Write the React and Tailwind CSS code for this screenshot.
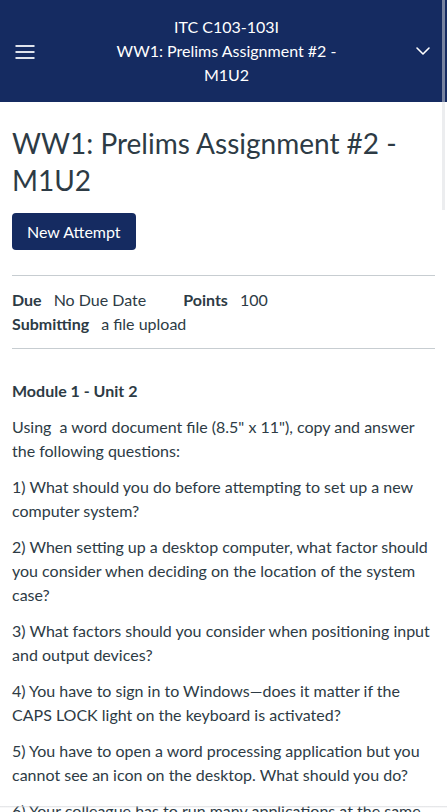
import { ChevronDown } from 'lucide-react';

const questions = [
    '1) What should you do before attempting to set up a new computer system?',
    '2) When setting up a desktop computer, what factor should you consider when deciding on the location of the system case?',
    '3) What factors should you consider when positioning input and output devices?',
    '4) You have to sign in to Windows\u2014does it matter if the CAPS LOCK light on the keyboard is activated?',
    '5) You have to open a word processing application but you cannot see an icon on the desktop. What should you do?',
    '6) Your colleague has to run many applications at the same time. What should they do to keep the computer running smoothly?',
];

const MenuIcon = () => (
    <svg width="20" height="14" viewBox="0 0 20 14" className="block">
        <rect x="0.5" y="0" width="19" height="2" fill="#dfe3ec" />
        <rect x="0.5" y="6" width="19" height="2" fill="#dfe3ec" />
        <rect x="0.5" y="12" width="19" height="2" fill="#dfe3ec" />
    </svg>
);

const App = () => {
    return (
        <div className="relative h-[812px] overflow-hidden bg-white text-[#2d3b45] font-['Lato','Liberation_Sans',sans-serif]">
            {/* top bar */}
            <header className="flex items-center h-[102px] bg-[#152b61] text-white">
                <div className="w-[114px] pl-[15px] pt-[2px] flex items-center">
                    <MenuIcon />
                </div>
                <div className="flex-1 text-center text-[16px] leading-[24px]">
                    <div>ITC C103-103I</div>
                    <div>WW1: Prelims Assignment #2 - M1U2</div>
                </div>
                <div className="w-[108px] pr-[12px] flex justify-end items-center">
                    <ChevronDown className="w-[24px] h-[24px] text-white" strokeWidth={1.6} />
                </div>
            </header>

            <main className="px-3">
                <h1 className="mt-[23px] text-[28px] leading-[37px] font-normal">
                    WW1: Prelims Assignment #2 - M1U2
                </h1>
                <button className="mt-[14px] h-[37px] px-[15px] rounded-[4px] bg-[#152b61] text-white text-[16px]">
                    New Attempt
                </button>

                <div className="mt-[25px] border-t border-b border-[#c7cdd1] py-3 text-[16px] leading-[24px]">
                    <div className="flex">
                        <span className="font-bold mr-3">Due</span>
                        <span className="mr-[37px]">No Due Date</span>
                        <span className="font-bold mr-3">Points</span>
                        <span>100</span>
                    </div>
                    <div className="flex">
                        <span className="font-bold mr-3">Submitting</span>
                        <span>a file upload</span>
                    </div>
                </div>

                <div className="mt-[30px] text-[16px] leading-[24px]">
                    <p className="font-bold mb-3">Module 1 - Unit 2</p>
                    <p className="mb-3">Using{'\u00a0'} a word document file (8.5" x 11"), copy and answer the following questions:</p>
                    {questions.map((q, i) => (
                        <p key={i} className="mb-3">{q}</p>
                    ))}
                </div>
            </main>

            {/* overlay scrollbar */}
            <div className="absolute top-0 right-[2px] w-[3px] h-[210px] bg-[#d9dbe0]/50" />
            {/* bottom edge shadow */}
            <div className="absolute left-0 right-0 top-[806px] h-[2px] bg-gradient-to-b from-[#d6d8db]/80 to-transparent" />
        </div>
    );
};

export default App;
